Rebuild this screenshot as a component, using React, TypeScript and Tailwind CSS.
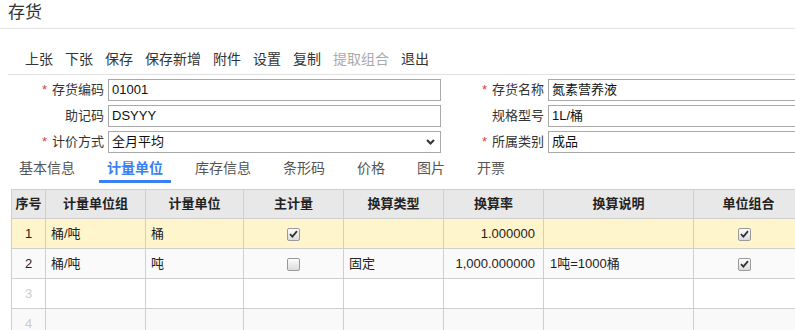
import React from "react";

const font = {
    fontFamily: '"Liberation Sans", "Noto Sans CJK SC", sans-serif',
};

const toolbar = ["上张", "下张", "保存", "保存新增", "附件", "设置", "复制", "提取组合", "退出"];
const tabs = ["基本信息", "计量单位", "库存信息", "条形码", "价格", "图片", "开票"];

const cols = [
    { title: "序号", w: "w-[34px]" },
    { title: "计量单位组", w: "w-[100px]" },
    { title: "计量单位", w: "w-[98px]" },
    { title: "主计量", w: "w-[100px]" },
    { title: "换算类型", w: "w-[100px]" },
    { title: "换算率", w: "w-[100px]" },
    { title: "换算说明", w: "w-[150px]" },
    { title: "单位组合", w: "w-[110px]" },
];

function Check({ checked }: { checked: boolean }) {
    return (
        <span className="inline-flex w-[13px] h-[13px] rounded-[2px] border border-[#9a9a9a] bg-gradient-to-b from-[#fdfdfd] to-[#dcdcdc] items-center justify-center align-middle">
            {checked && (
                <svg width="9" height="8" viewBox="0 0 9 8">
                    <path d="M1 4.2 L3.4 6.6 L8 1.2" stroke="#333" strokeWidth="1.8" fill="none" />
                </svg>
            )}
        </span>
    );
}

function Field({
    label,
    required,
    value,
    select,
    labelW,
    inputW,
}: {
    label: string;
    required?: boolean;
    value: string;
    select?: boolean;
    labelW: string;
    inputW: string;
}) {
    return (
        <div className="flex items-center h-[22px]">
            <div className={`${labelW} text-right pr-[4px] text-[13px] text-[#333] leading-[22px]`}>
                {required && <span className="text-[#e4393c] mr-[5px]">*</span>}
                {label}
            </div>
            <div
                className={`${inputW} h-[22px] border border-[#a9a9a9] flex items-center px-[3px] text-[13px] text-[#111] bg-white`}>
                <span className="flex-1">{value}</span>
                {select && (
                    <svg width="9" height="6" viewBox="0 0 9 6" className="mr-[2px]">
                        <path d="M1 1 L4.5 4.5 L8 1" stroke="#333" strokeWidth="2" fill="none" />
                    </svg>
                )}
            </div>
        </div>
    );
}

export default function App() {
    const rows = [
        { n: "1", group: "桶/吨", unit: "桶", main: true, type: "", rate: "1.000000", desc: "", combo: true, bg: "bg-[#fff5cc]" },
        { n: "2", group: "桶/吨", unit: "吨", main: false, type: "固定", rate: "1,000.000000", desc: "1吨=1000桶", combo: true, bg: "bg-[#fafafa]" },
        { n: "3", bg: "bg-white" },
        { n: "4", bg: "bg-[#f9f9f9]" },
    ] as any[];

    return (
        <div className="w-[795px] h-[330px] overflow-hidden bg-white text-[#333]" style={font}>
            <div className="h-[29px] border-b border-[#e3e3e3] pl-[8px] text-[17px] leading-[26px] text-[#333]">
                存货
            </div>
            <div className="ml-[8px] border-b border-[#e0e0e0] pt-[20px] pb-[5px] pl-[17px] flex gap-[12px] text-[14px] leading-[20px]">
                {toolbar.map((t) => (
                    <span key={t} className={t === "提取组合" ? "text-[#aaa]" : "text-[#333]"}>
                        {t}
                    </span>
                ))}
            </div>
            <div className="flex mt-[4px]">
                <div className="flex flex-col gap-[4px]">
                    <Field label="存货编码" required value="01001" labelW="w-[108px]" inputW="w-[333px]" />
                    <Field label="助记码" value="DSYYY" labelW="w-[108px]" inputW="w-[333px]" />
                    <Field label="计价方式" required value="全月平均" select labelW="w-[108px]" inputW="w-[333px]" />
                </div>
                <div className="flex flex-col gap-[4px]">
                    <Field label="存货名称" required value="氮素营养液" labelW="w-[107px]" inputW="w-[260px]" />
                    <Field label="规格型号" value="1L/桶" labelW="w-[107px]" inputW="w-[260px]" />
                    <Field label="所属类别" required value="成品" labelW="w-[107px]" inputW="w-[260px]" />
                </div>
            </div>
            <div className="flex gap-[16px] pl-[11px] mt-[5px]">
                {tabs.map((t) => (
                    <div
                        key={t}
                        className={
                            t === "计量单位"
                                ? "px-[8px] pb-[2px] leading-[20px] text-[14px] font-bold text-[#3a80f2] border-b-[3px] border-[#3a80f2]"
                                : "px-[8px] pb-[2px] leading-[20px] text-[14px] text-[#555] border-b-[3px] border-transparent"
                        }>
                        {t}
                    </div>
                ))}
            </div>
            <table className="w-[792px] ml-[11px] mt-[6px] border-collapse table-fixed text-[13px]">
                <thead>
                    <tr className="bg-[#e8e8e8] h-[29px]">
                        {cols.map((c) => (
                            <th key={c.title} className={`${c.w} border border-[#cfcfcf] font-bold text-[#222] text-center p-0`}>
                                {c.title}
                            </th>
                        ))}
                    </tr>
                </thead>
                <tbody>
                    {rows.map((r) => (
                        <tr key={r.n} className={`${r.bg} h-[30px]`}>
                            <td className={`border border-[#cfcfcf] text-center ${r.group ? "text-[#222]" : "text-[#ccc]"}`}>
                                {r.n}
                            </td>
                            <td className="border border-[#cfcfcf] px-[5px] text-[#222]">{r.group}</td>
                            <td className="border border-[#cfcfcf] px-[5px] text-[#222]">{r.unit}</td>
                            <td className="border border-[#cfcfcf] text-center">
                                {r.group && <Check checked={r.main} />}
                            </td>
                            <td className="border border-[#cfcfcf] px-[5px] text-[#222]">{r.type}</td>
                            <td className="border border-[#cfcfcf] px-[8px] text-right text-[#222]">{r.rate}</td>
                            <td className="border border-[#cfcfcf] px-[6px] text-[#222]">{r.desc}</td>
                            <td className="border border-[#cfcfcf] text-center pr-[8px]">
                                {r.group && <Check checked={r.combo} />}
                            </td>
                        </tr>
                    ))}
                </tbody>
            </table>
        </div>
    );
}
